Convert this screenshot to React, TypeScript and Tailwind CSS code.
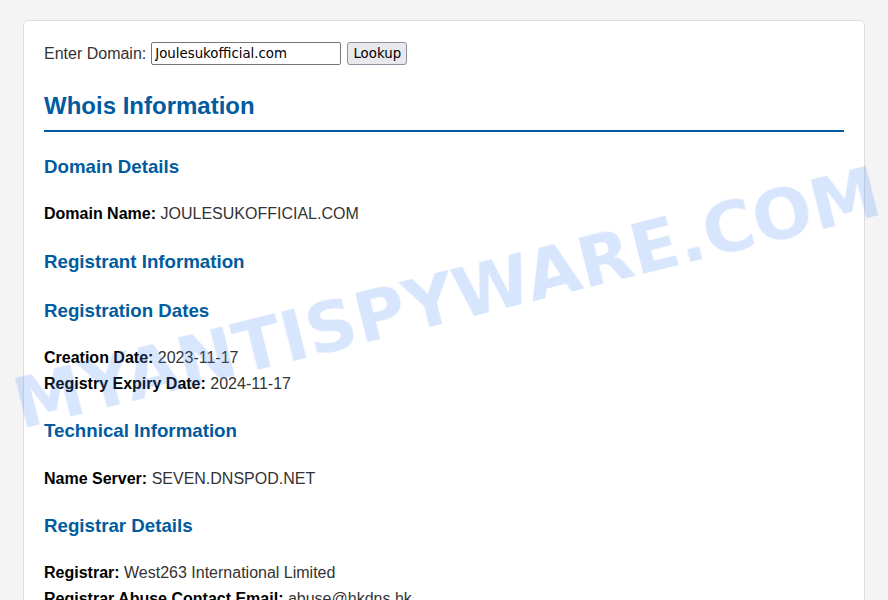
import React from 'react';

interface Field {
  label: string;
  value: string;
}

interface Section {
  title: string;
  fields: Field[];
}

const sections: Section[] = [
  { title: 'Domain Details', fields: [{ label: 'Domain Name', value: 'JOULESUKOFFICIAL.COM' }] },
  { title: 'Registrant Information', fields: [] },
  {
    title: 'Registration Dates',
    fields: [
      { label: 'Creation Date', value: '2023-11-17' },
      { label: 'Registry Expiry Date', value: '2024-11-17' },
    ],
  },
  { title: 'Technical Information', fields: [{ label: 'Name Server', value: 'SEVEN.DNSPOD.NET' }] },
  {
    title: 'Registrar Details',
    fields: [
      { label: 'Registrar', value: 'West263 International Limited' },
      { label: 'Registrar Abuse Contact Email', value: 'abuse@hkdns.hk' },
    ],
  },
];

export default function App() {
  return (
    <div className="relative min-h-screen overflow-hidden bg-[#f4f4f4] px-[23px] pt-[20px] font-['Liberation_Sans',Arial,sans-serif] text-[16px] leading-[1.6] text-[#333]">
      <div className="rounded-[5px] border border-[#dcdcdc] bg-white p-[20px]">
        {/* Lookup form */}
        <form className="flex h-[25.6px] items-center" onSubmit={(e) => e.preventDefault()}>
          <label htmlFor="domain">Enter Domain:</label>
          <input
            id="domain"
            type="text"
            defaultValue="Joulesukofficial.com"
            className="ml-[5px] h-[23px] w-[190px] rounded-[2px] border border-[#767676] bg-white px-[3px] font-['DejaVu_Sans',sans-serif] text-[13.33px] text-black"
          />
          <button
            type="submit"
            className="ml-[6px] h-[23px] w-[60px] rounded-[3px] border border-[#8f8f9d] bg-[#e9e9ed] font-['DejaVu_Sans',sans-serif] text-[13.33px] leading-none text-black"
          >
            Lookup
          </button>
        </form>

        <h2 className="mt-[20px] mb-[20px] border-b-2 border-[#005b9f] pb-[5px] text-[24px] font-bold text-[#005b9f]">
          Whois Information
        </h2>

        {sections.map((s) => (
          <div key={s.title}>
            <h3 className="my-[19.5px] text-[18.72px] font-bold text-[#005b9f]">{s.title}</h3>
            {s.fields.length > 0 && (
              <div className="my-[19.5px]">
                {s.fields.map((f) => (
                  <div key={f.label}>
                    <strong className="font-bold text-black">{f.label}:</strong> {f.value}
                  </div>
                ))}
              </div>
            )}
          </div>
        ))}
      </div>

      {/* Watermark */}
      <div className="pointer-events-none absolute left-[447px] top-[298px] -translate-x-1/2 -translate-y-1/2 rotate-[-14deg] whitespace-nowrap font-['DejaVu_Sans',sans-serif] text-[70px] leading-none font-bold text-[rgba(66,133,244,0.21)] blur-[0.6px]">
        MYANTISPYWARE.COM
      </div>
    </div>
  );
}
